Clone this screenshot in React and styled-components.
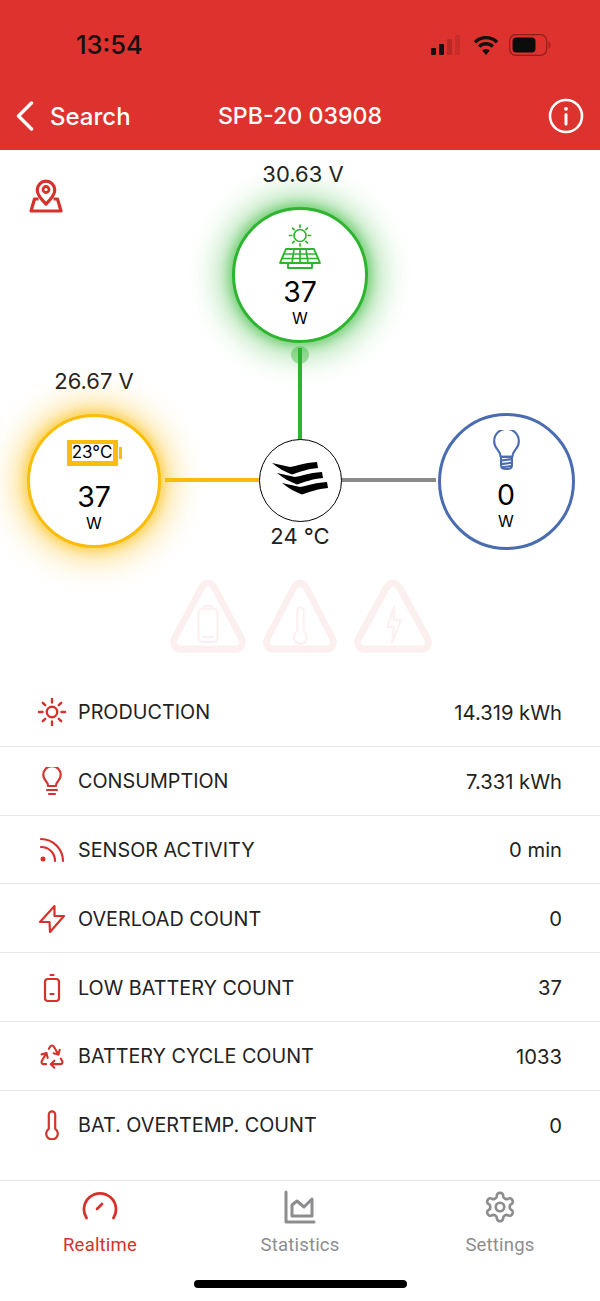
import React from 'react';
import styled, { createGlobalStyle } from 'styled-components';
import { Recycle } from 'lucide-react';

const RED = '#dd322d';
const ICON_RED = '#d5322c';
const GREEN = '#2db52f';
const YELLOW = '#fbbc0b';
const BLUE = '#4a6cb0';

const GlobalStyle = createGlobalStyle`
  html, body {
    margin: 0;
    padding: 0;
    background: #fff;
  }
  body {
    font-family: Inter, "Liberation Sans", sans-serif;
    color: #1d1d1f;
  }
`;

const Page = styled.div`
  width: 600px;
  height: 1301px;
  display: flex;
  flex-direction: column;
  overflow: hidden;
  background: #fff;
`;

const Header = styled.header`
  height: 150px;
  flex: none;
  background: ${RED};
  display: flex;
  flex-direction: column;
`;

const StatusBar = styled.div`
  height: 90px;
  display: flex;
  align-items: flex-end;
  justify-content: space-between;
  padding: 0 49px 30px 76px;
  box-sizing: border-box;
`;

const Clock = styled.span`
  font-size: 25.5px;
  line-height: 30px;
  font-weight: 500;
  color: #111;
`;

const StatusIcons = styled.div`
  display: flex;
  align-items: center;
  gap: 10px;
  height: 30px;
`;

const NavBar = styled.div`
  height: 60px;
  display: grid;
  grid-template-columns: 1fr auto 1fr;
  align-items: center;
  padding: 0 16px 8px 16px;
  box-sizing: border-box;
  color: #fff;
`;

const BackLink = styled.div`
  display: flex;
  align-items: center;
  gap: 16px;
  font-size: 24px;
  font-weight: 500;
`;

const NavTitle = styled.div`
  font-size: 23.2px;
  font-weight: 500;
`;

const NavAction = styled.div`
  display: flex;
  justify-content: flex-end;
`;

const Diagram = styled.section`
  position: relative;
  height: 528px;
  flex: none;
`;

const MapButton = styled.div`
  position: absolute;
  left: 27px;
  top: 28px;
  width: 38px;
  height: 36px;
`;

const Reading = styled.div`
  position: absolute;
  left: ${(p) => p.$x}px;
  top: ${(p) => p.$y}px;
  transform: translate(-50%, -50%);
  font-size: 22px;
  line-height: 26px;
  white-space: nowrap;
  color: #222;
`;

const Node = styled.div`
  position: absolute;
  left: ${(p) => p.$x - p.$size / 2}px;
  top: ${(p) => p.$y - p.$size / 2}px;
  width: ${(p) => p.$size}px;
  height: ${(p) => p.$size}px;
  box-sizing: border-box;
  border-radius: 50%;
  border: ${(p) => p.$stroke}px solid ${(p) => p.$color};
  background: #fff;
  box-shadow: ${(p) => (p.$glow ? `0 0 10px 4px ${p.$glow}, 0 0 30px 13px ${p.$glow}` : 'none')};
  display: flex;
  flex-direction: column;
  align-items: center;
  color: #000;
`;

const NodeIcon = styled.div`
  height: ${(p) => p.$h}px;
  margin-top: ${(p) => p.$top}px;
  display: flex;
  align-items: center;
  justify-content: center;
`;

const Watts = styled.div`
  font-size: 28.5px;
  line-height: 32px;
  margin-top: ${(p) => p.$gap}px;
`;

const Unit = styled.div`
  font-size: 16px;
  line-height: 20px;
`;

const Link = styled.div`
  position: absolute;
  left: ${(p) => p.$x}px;
  top: ${(p) => p.$y}px;
  width: ${(p) => p.$w}px;
  height: ${(p) => p.$h}px;
  background: ${(p) => p.$color};
`;

const FlowDot = styled.div`
  position: absolute;
  left: 291px;
  top: 196px;
  width: 18px;
  height: 18px;
  border-radius: 50%;
  background: ${GREEN};
  opacity: 0.4;
`;

const BatteryGauge = styled.div`
  display: flex;
  align-items: center;
  gap: 1px;
`;

const GaugeBody = styled.div`
  width: 51px;
  height: 26px;
  box-sizing: border-box;
  border: 5px solid ${YELLOW};
  border-top-width: 4px;
  font-size: 17px;
  line-height: 17px;
  display: flex;
  justify-content: center;
  white-space: nowrap;
`;

const GaugeTip = styled.div`
  width: 3px;
  height: 12px;
  background: ${YELLOW};
`;

const Warnings = styled.div`
  position: absolute;
  left: 170px;
  top: 429px;
  width: 262px;
  display: flex;
  justify-content: space-between;
  opacity: 0.07;
`;

const List = styled.ul`
  list-style: none;
  margin: 0;
  padding: 0;
  flex: none;
`;

const Row = styled.li`
  height: 68.8px;
  box-sizing: border-box;
  display: flex;
  align-items: center;
  padding: 1px 38px 0 36px;
  border-bottom: 1px solid ${(p) => (p.$last ? 'transparent' : '#e7e7e7')};
  font-size: 19.8px;
  color: #222;
`;

const RowIcon = styled.span`
  width: 32px;
  height: 32px;
  margin-right: 10px;
  display: flex;
  align-items: center;
  justify-content: center;
  color: ${ICON_RED};
`;

const RowLabel = styled.span`
  flex: 1;
`;

const RowValue = styled.span`
  font-size: 20.2px;
`;

const TabBar = styled.nav`
  margin-top: 20.4px;
  height: 120px;
  flex: none;
  position: relative;
  border-top: 1px solid #e6e6e6;
  display: grid;
  grid-template-columns: repeat(3, 1fr);
`;

const Tab = styled.div`
  display: flex;
  flex-direction: column;
  align-items: center;
  padding-top: 7px;
  color: ${(p) => (p.$active ? ICON_RED : '#8d8d8f')};
  font-family: Roboto, sans-serif;
  font-size: 18.5px;
  line-height: 22px;
  letter-spacing: 0.2px;
`;

const TabIcon = styled.div`
  height: 38px;
  margin-bottom: 8px;
  display: flex;
  align-items: center;
`;

const HomeBar = styled.div`
  position: absolute;
  left: 194px;
  bottom: 13px;
  width: 213px;
  height: 8px;
  border-radius: 4px;
  background: #000;
`;

const SignalIcon = () => (
  <svg width="32" height="22" viewBox="0 0 32 22">
    <rect x="0" y="14" width="5" height="7" rx="1" fill="#111" />
    <rect x="8" y="10" width="5" height="11" rx="1" fill="#111" />
    <rect x="16" y="5" width="5" height="16" rx="1" fill="#b92a27" />
    <rect x="24" y="1" width="5" height="20" rx="1" fill="#c92d29" />
  </svg>
);

const WifiIcon = () => (
  <svg width="26" height="22" viewBox="0 0 26 22" fill="none" stroke="#111" strokeWidth="3.4">
    <path d="M2 8.2a15.6 15.6 0 0 1 22 0" />
    <path d="M6.2 12.6a9.6 9.6 0 0 1 13.6 0" />
    <path d="M13 21l-3.800-4.400a5.4 5.4 0 0 1 7.600 0z" fill="#111" stroke="none" />
  </svg>
);

const StatusBattery = () => (
  <svg width="42" height="22" viewBox="0 0 42 22">
    <rect x="0.7" y="0.7" width="37" height="20.6" rx="6" fill="none" stroke="#8f1f1d" strokeWidth="1.2" />
    <rect x="3.5" y="3.5" width="23" height="15" rx="4" fill="#0c0c0c" />
    <path d="M39.5 7.5c1.6.6 2 2 2 3.500s-.4 2.900-2 3.500z" fill="#a32421" />
  </svg>
);

const BackChevron = () => (
  <svg width="18" height="30" viewBox="0 0 18 30" fill="none" stroke="#fff" strokeWidth="3.4" strokeLinecap="round" strokeLinejoin="round">
    <path d="M15.5 2L2.5 15l13 13" />
  </svg>
);

const InfoIcon = () => (
  <svg width="36" height="36" viewBox="0 0 36 36" fill="none" stroke="#fff">
    <circle cx="18" cy="18" r="16" strokeWidth="2.6" />
    <path d="M18 16.5v9.500" strokeWidth="3" strokeLinecap="round" />
    <circle cx="18" cy="10.8" r="1.9" fill="#fff" stroke="none" />
  </svg>
);

const MapPinIcon = () => (
  <svg width="38" height="36" viewBox="0 0 38 36" fill="none" stroke={ICON_RED} strokeWidth="3.2" strokeLinejoin="round">
    <path d="M19 26c-5.500-5.400-8.800-9.500-8.800-14a8.800 8.800 0 0 1 17.600 0c0 4.500-3.300 8.600-8.800 14z" />
    <circle cx="19" cy="11.5" r="3" strokeWidth="2.8" />
    <path d="M11.500 21H7.500L4 33h30l-3.500-12h-4" />
  </svg>
);

const SolarIcon = () => (
  <svg width="44" height="48" viewBox="0 0 44 48" fill="none" stroke={GREEN} strokeWidth="1.7" strokeLinecap="round" strokeLinejoin="round">
    <circle cx="22" cy="11.500" r="6" />
    <path d="M22 1v2.200M22 19.800V22M11.500 11.500h2.200M30.300 11.500h2.200M14.600 4.100l1.500 1.500M27.900 17.400l1.500 1.500M14.600 18.900l1.500-1.500M27.900 5.600l1.500-1.500" />
    <path d="M8 25h28l6 14H2z" strokeWidth="1.9" />
    <path d="M5.500 30h33M3.700 34.500h36.600M16 25l-2 14M28 25l2 14M22 25v14" />
    <path d="M10 39v5h24v-5" strokeWidth="1.9" />
  </svg>
);

const LoadBulbIcon = () => (
  <svg width="29" height="41" viewBox="0 0 32 44" fill="none" stroke={BLUE} strokeWidth="2.3" strokeLinecap="round" strokeLinejoin="round">
    <path d="M9.500 29c0-4-1.400-5.500-3.600-8.200A13.600 13.600 0 1 1 26.100 20.800C23.900 23.500 22.500 25 22.500 29z" />
    <path d="M10 29h12v9.500c0 2.500-2.500 4-6 4s-6-1.500-6-4z" />
    <path d="M10 33l12-1.500M10 37l12-1.500M11 40.500l10-1.300" />
  </svg>
);

const hubBands = [
  { dx: 0, dy: 0 },
  { dx: 5, dy: 10 },
  { dx: 10, dy: 20 },
];

const HubIcon = () => (
  <svg width="56" height="33" viewBox="0 0 56 33" fill="#000">
    {hubBands.map((b) => (
      <path
        key={b.dx}
        transform={`translate(${b.dx} ${b.dy})`}
        d="M0 1C6 2 12 4 18 5C25 4 31 1 45 0L46 6C35 7 28 10 20 12.500C13 10 6 6 0 1z"
      />
    ))}
  </svg>
);

const BatteryWarnGlyph = () => (
  <>
    <rect x="30" y="30" width="20" height="33" rx="4" />
    <path d="M36 30v-3h8v3" />
    <path d="M34 58h12" />
  </>
);

const ThermoWarnGlyph = () => (
  <path d="M37 32a3.500 3.500 0 0 1 7 0v20a7 7 0 1 1-7 0z" />
);

const BoltWarnGlyph = () => (
  <path d="M41 28l-7 20h7l-2 16 9-23h-7z" />
);

const WarningTriangle = ({ children, width }) => (
  <svg width={width} height="74" viewBox="0 0 80 74" preserveAspectRatio="none" fill="none" stroke={RED} strokeLinejoin="round" strokeWidth="2">
    <path d="M40 4c3 0 5 1.500 7 5l28 50c3 6 0 11-6 11H11c-6 0-9-5-6-11L33 9c2-3.500 4-5 7-5z" strokeWidth="7" />
    {children}
  </svg>
);

const SunIcon = () => (
  <svg width="30" height="30" viewBox="0 0 30 30" fill="none" stroke="currentColor" strokeWidth="2.4" strokeLinecap="round">
    <circle cx="15" cy="15" r="5.2" />
    <path d="M15 2v3.500M15 24.500V28M2 15h3.500M24.500 15H28M5.800 5.800l2.400 2.400M21.800 21.800l2.400 2.400M5.800 24.200l2.400-2.400M21.800 8.200l2.400-2.400" />
  </svg>
);

const BulbIcon = () => (
  <svg width="20" height="29" viewBox="0 0 20 29" fill="none" stroke="currentColor" strokeWidth="2.2" strokeLinecap="round" strokeLinejoin="round">
    <path d="M6 19c0-2.500-1-3.800-2.500-5.400a8.700 8.700 0 1 1 13 0C15 15.200 14 16.500 14 19z" />
    <path d="M5 23h10M7 27h6" />
  </svg>
);

const RssIcon = () => (
  <svg width="26" height="26" viewBox="0 0 26 26" fill="none" stroke="currentColor" strokeWidth="2.2" strokeLinecap="round">
    <path d="M2 2c12 0 22 10 22 22" />
    <path d="M2 10c8 0 14 6 14 14" />
    <circle cx="4" cy="22" r="2.500" fill="currentColor" stroke="none" />
  </svg>
);

const BoltIcon = () => (
  <svg width="28" height="30" viewBox="0 0 28 30" fill="none" stroke="currentColor" strokeWidth="2.2" strokeLinejoin="round">
    <path d="M16.500 2L2 18h9.500l.5 10L26 12H16.500z" />
  </svg>
);

const CellIcon = () => (
  <svg width="18" height="30" viewBox="0 0 18 30" fill="none" stroke="currentColor" strokeWidth="2.2" strokeLinecap="round">
    <rect x="2" y="6" width="14" height="22" rx="3" />
    <path d="M7.500 2h3M7.500 21h3" />
  </svg>
);

const ThermometerIcon = () => (
  <svg width="16" height="30" viewBox="0 0 16 30" fill="none" stroke="currentColor" strokeWidth="2.2" strokeLinejoin="round">
    <path d="M4.800 4.500a3.200 3.200 0 0 1 6.400 0v14.300a5.800 5.800 0 1 1-6.400 0z" />
  </svg>
);

const SpeedometerIcon = () => (
  <svg width="36" height="32" viewBox="0 0 36 32" fill="none" stroke="currentColor" strokeWidth="2.8" strokeLinecap="round">
    <path d="M4.500 27A16 16 0 1 1 31.500 27" />
    <path d="M15 18l5-5" />
  </svg>
);

const StatsIcon = () => (
  <svg width="32" height="34" viewBox="0 0 32 34" fill="none" stroke="currentColor" strokeWidth="3" strokeLinecap="round" strokeLinejoin="round">
    <path d="M2 2v30h28" />
    <path d="M8 26V15l5-4 7 6 8-8v17z" />
  </svg>
);

const GearIcon = () => (
  <svg width="34" height="36" viewBox="0 0 24 24" fill="none" stroke="currentColor" strokeWidth="1.9" strokeLinecap="round" strokeLinejoin="round">
    <path d="M12.220 2h-.44a2 2 0 0 0-2 2v.18a2 2 0 0 1-1 1.730l-.43.250a2 2 0 0 1-2 0l-.15-.080a2 2 0 0 0-2.730.730l-.220.380a2 2 0 0 0 .730 2.730l.150.100a2 2 0 0 1 1 1.720v.510a2 2 0 0 1-1 1.740l-.150.090a2 2 0 0 0-.730 2.730l.220.380a2 2 0 0 0 2.730.730l.150-.080a2 2 0 0 1 2 0l.43.250a2 2 0 0 1 1 1.730V20a2 2 0 0 0 2 2h.44a2 2 0 0 0 2-2v-.18a2 2 0 0 1 1-1.730l.43-.250a2 2 0 0 1 2 0l.15.080a2 2 0 0 0 2.730-.730l.220-.390a2 2 0 0 0-.730-2.730l-.150-.080a2 2 0 0 1-1-1.740v-.500a2 2 0 0 1 1-1.740l.150-.090a2 2 0 0 0 .730-2.730l-.220-.380a2 2 0 0 0-2.730-.730l-.150.080a2 2 0 0 1-2 0l-.43-.250a2 2 0 0 1-1-1.730V4a2 2 0 0 0-2-2z" />
    <circle cx="12" cy="12" r="3" />
  </svg>
);

const rows = [
  { label: 'PRODUCTION', value: '14.319 kWh', icon: <SunIcon /> },
  { label: 'CONSUMPTION', value: '7.331 kWh', icon: <BulbIcon /> },
  { label: 'SENSOR ACTIVITY', value: '0 min', icon: <RssIcon /> },
  { label: 'OVERLOAD COUNT', value: '0', icon: <BoltIcon /> },
  { label: 'LOW BATTERY COUNT', value: '37', icon: <CellIcon /> },
  { label: 'BATTERY CYCLE COUNT', value: '1033', icon: <Recycle size={28} strokeWidth={1.8} /> },
  { label: 'BAT. OVERTEMP. COUNT', value: '0', icon: <ThermometerIcon /> },
];

const tabs = [
  { label: 'Realtime', icon: <SpeedometerIcon />, active: true },
  { label: 'Statistics', icon: <StatsIcon /> },
  { label: 'Settings', icon: <GearIcon /> },
];

const App = () => {
  return (
    <Page>
      <GlobalStyle />
      <Header>
        <StatusBar>
          <Clock>13:54</Clock>
          <StatusIcons>
            <SignalIcon />
            <WifiIcon />
            <StatusBattery />
          </StatusIcons>
        </StatusBar>
        <NavBar>
          <BackLink>
            <BackChevron />
            Search
          </BackLink>
          <NavTitle>SPB-20 03908</NavTitle>
          <NavAction>
            <InfoIcon />
          </NavAction>
        </NavBar>
      </Header>

      <Diagram>
        <MapButton>
          <MapPinIcon />
        </MapButton>

        <Reading $x={303} $y={24}>30.63 V</Reading>
        <Reading $x={94} $y={231}>26.67 V</Reading>
        <Reading $x={300} $y={386}>24 °C</Reading>

        <Link $x={298} $y={198} $w={4} $h={94} $color={GREEN} />
        <FlowDot />
        <Link $x={165} $y={328} $w={96} $h={4} $color={YELLOW} />
        <Link $x={341} $y={328} $w={95} $h={4} $color="#8a8a8a" />

        <Node $x={300} $y={125} $size={136} $stroke={3} $color={GREEN} $glow="rgba(45, 181, 47, 0.42)">
          <NodeIcon $h={46} $top={15}><SolarIcon /></NodeIcon>
          <Watts $gap={5}>37</Watts>
          <Unit>W</Unit>
        </Node>

        <Node $x={94} $y={331} $size={134} $stroke={3} $color={YELLOW} $glow="rgba(251, 188, 11, 0.45)">
          <NodeIcon $h={26} $top={23}>
            <BatteryGauge>
              <GaugeBody>23°C</GaugeBody>
              <GaugeTip />
            </BatteryGauge>
          </NodeIcon>
          <Watts $gap={15}>37</Watts>
          <Unit>W</Unit>
        </Node>

        <Node $x={506} $y={331} $size={137} $stroke={3} $color={BLUE}>
          <NodeIcon $h={41} $top={14}><LoadBulbIcon /></NodeIcon>
          <Watts $gap={8}>0</Watts>
          <Unit>W</Unit>
        </Node>

        <Node $x={300} $y={330} $size={83} $stroke={1.5} $color="#000">
          <NodeIcon $h={33} $top={22}><HubIcon /></NodeIcon>
        </Node>

        <Warnings>
          <WarningTriangle width={76}><BatteryWarnGlyph /></WarningTriangle>
          <WarningTriangle width={74}><ThermoWarnGlyph /></WarningTriangle>
          <WarningTriangle width={78}><BoltWarnGlyph /></WarningTriangle>
        </Warnings>
      </Diagram>

      <List>
        {rows.map((row, i) => (
          <Row key={row.label} $last={i === rows.length - 1}>
            <RowIcon>{row.icon}</RowIcon>
            <RowLabel>{row.label}</RowLabel>
            <RowValue>{row.value}</RowValue>
          </Row>
        ))}
      </List>

      <TabBar>
        {tabs.map((tab) => (
          <Tab key={tab.label} $active={tab.active}>
            <TabIcon>{tab.icon}</TabIcon>
            {tab.label}
          </Tab>
        ))}
        <HomeBar />
      </TabBar>
    </Page>
  );
};

export default App;
